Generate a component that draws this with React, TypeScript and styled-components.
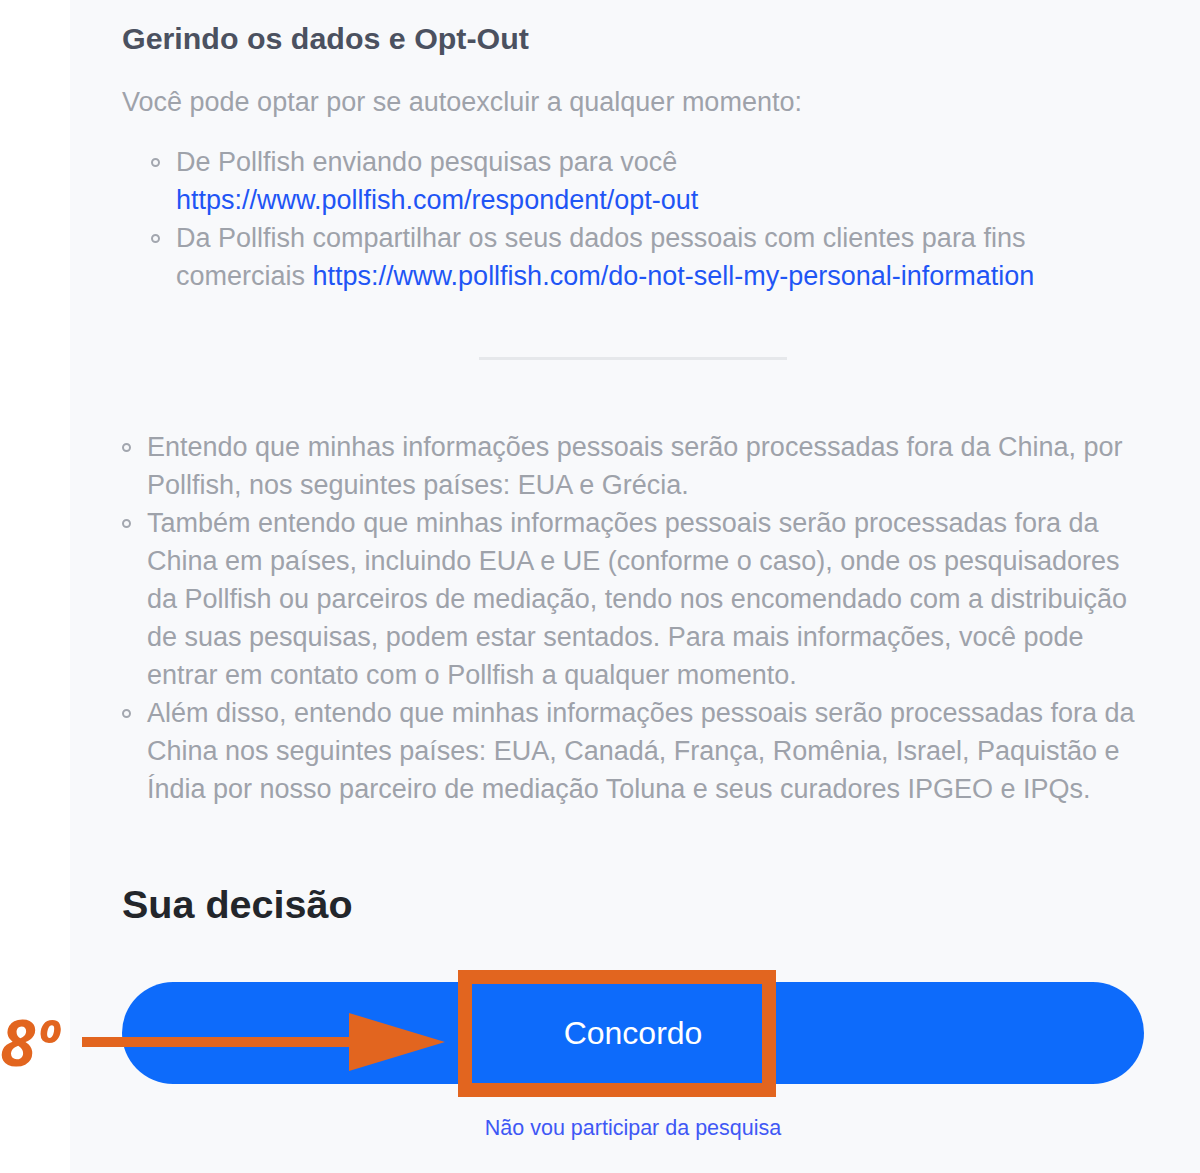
import React from 'react';
import styled, { createGlobalStyle } from 'styled-components';

const GlobalStyle = createGlobalStyle`
  html, body {
    margin: 0;
    padding: 0;
    background: #ffffff;
  }
  body {
    font-family: 'Liberation Sans', Arial, sans-serif;
  }
`;

const Page = styled.div`
  position: relative;
  display: flex;
  width: 1200px;
  height: 1173px;
  overflow: hidden;
`;

const Gutter = styled.div`
  flex: 0 0 70px;
  background: #ffffff;
`;

const Panel = styled.main`
  flex: 1;
  display: flex;
  flex-direction: column;
  background: #f8f9fb;
  padding: 18px 56px 0 52px;
`;

const SectionTitle = styled.h3`
  margin: 0;
  font-size: 30.4px;
  line-height: 40px;
  font-weight: 700;
  color: #4b5160;
`;

const Lead = styled.p`
  margin: 25px 0 0;
  font-size: 27px;
  line-height: 38px;
  color: #9ea2aa;
`;

const List = styled.ul<{ $indent: number; $top: number }>`
  list-style: none;
  margin: ${(p) => p.$top}px 0 0;
  padding: 0 0 0 ${(p) => p.$indent}px;
`;

const Item = styled.li`
  display: flex;
  font-size: 27px;
  line-height: 38px;
  color: #9ea2aa;

  &::before {
    content: '';
    flex: 0 0 auto;
    box-sizing: border-box;
    width: 9px;
    height: 9px;
    margin: 15px 16px 0 0;
    border: 2px solid #a3a7af;
    border-radius: 50%;
  }
`;

const ItemText = styled.span`
  display: block;
`;

const Link = styled.a`
  color: #1f55f5;
  text-decoration: none;
`;

const Divider = styled.hr`
  align-self: center;
  width: 308px;
  height: 3px;
  margin: 62px 0 0;
  border: none;
  background: #e6e8eb;
`;

const DecisionTitle = styled.h2`
  margin: 72px 0 0;
  font-size: 39.5px;
  line-height: 48px;
  font-weight: 700;
  color: #23262b;
`;

const AgreeButton = styled.button`
  margin-top: 54px;
  width: 100%;
  height: 102px;
  border: none;
  border-radius: 51px;
  background: #0d6bfb;
  color: #ffffff;
  font-family: 'Liberation Sans', Arial, sans-serif;
  font-size: 32px;
  cursor: pointer;
`;

const DeclineLink = styled.a`
  align-self: center;
  margin-top: 32px;
  font-size: 21.5px;
  line-height: 24px;
  color: #3f58f5;
  text-decoration: none;
`;

const Highlight = styled.div`
  position: absolute;
  left: 458px;
  top: 970px;
  width: 318px;
  height: 127px;
  box-sizing: border-box;
  border: 14px solid #e2651f;
`;

const StepLabel = styled.span`
  position: absolute;
  left: 0;
  top: 998px;
  font-family: 'Open Sans', 'Liberation Sans', sans-serif;
  font-style: italic;
  font-weight: 700;
  font-size: 64px;
  line-height: 88px;
  color: #e2651f;
`;

const Arrow = styled.svg`
  position: absolute;
  left: 0;
  top: 1000px;
`;

export default function App() {
  return (
    <>
      <GlobalStyle />
      <Page>
        <Gutter />
        <Panel>
          <SectionTitle>Gerindo os dados e Opt-Out</SectionTitle>
          <Lead>Você pode optar por se autoexcluir a qualquer momento:</Lead>
          <List $indent={29} $top={22}>
            <Item>
              <ItemText>
                De Pollfish enviando pesquisas para você{' '}
                <Link href="#">https://www.pollfish.com/respondent/opt-out</Link>
              </ItemText>
            </Item>
            <Item>
              <ItemText>
                Da Pollfish compartilhar os seus dados pessoais com clientes para fins comerciais{' '}
                <Link href="#">https://www.pollfish.com/do-not-sell-my-personal-information</Link>
              </ItemText>
            </Item>
          </List>
          <Divider />
          <List $indent={0} $top={68}>
            <Item>
              <ItemText>
                Entendo que minhas informações pessoais serão processadas fora da China, por
                Pollfish, nos seguintes países: EUA e Grécia.
              </ItemText>
            </Item>
            <Item>
              <ItemText>
                Também entendo que minhas informações pessoais serão processadas fora da China em
                países, incluindo EUA e UE (conforme o caso), onde os pesquisadores da Pollfish ou
                parceiros de mediação, tendo nos encomendado com a distribuição de suas pesquisas,
                podem estar sentados. Para mais informações, você pode entrar em contato com o
                Pollfish a qualquer momento.
              </ItemText>
            </Item>
            <Item>
              <ItemText>
                Além disso, entendo que minhas informações pessoais serão processadas fora da China
                nos seguintes países: EUA, Canadá, França, Romênia, Israel, Paquistão e Índia por
                nosso parceiro de mediação Toluna e seus curadores IPGEO e IPQs.
              </ItemText>
            </Item>
          </List>
          <DecisionTitle>Sua decisão</DecisionTitle>
          <AgreeButton>Concordo</AgreeButton>
          <DeclineLink href="#">Não vou participar da pesquisa</DeclineLink>
        </Panel>

        <Highlight />
        <StepLabel>8º</StepLabel>
        <Arrow width="450" height="90" viewBox="0 0 450 90">
          <rect x="82" y="37" width="270" height="10" fill="#e2651f" />
          <polygon points="349,13 445,42 349,71" fill="#e2651f" />
        </Arrow>
      </Page>
    </>
  );
}
